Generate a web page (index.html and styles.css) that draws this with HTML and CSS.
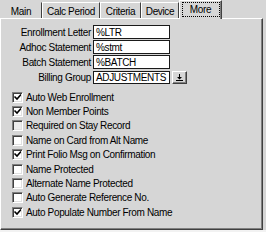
FILE: index.html
```html
<!DOCTYPE html>
<html lang="en">
<head>
    <meta charset="UTF-8">
    <title>More</title>
    <link rel="stylesheet" href="styles.css">
</head>
<body>
    <div class="tabs">
        <div class="tab tab-main">Main</div>
        <div class="tab tab-calc">Calc Period</div>
        <div class="tab tab-criteria">Criteria</div>
        <div class="tab tab-device">Device</div>
        <div class="tab tab-more active"><span class="focus">More</span></div>
    </div>

    <div class="panel">
        <div class="fields">
            <label class="field-label">Enrollment Letter</label>
            <div class="text-box">%LTR</div>

            <label class="field-label">Adhoc Statement</label>
            <div class="text-box">%stmt</div>

            <label class="field-label">Batch Statement</label>
            <div class="text-box">%BATCH</div>

            <label class="field-label">Billing Group</label>
            <div class="combo">
                <div class="text-box">ADJUSTMENTS</div>
                <span class="combo-button">
                    <svg width="7" height="7" viewBox="0 0 7 7">
                        <path d="M3 0h1v3h2l-2.5 2.5L1 3h2z" fill="#000"/>
                        <rect x="0" y="6" width="7" height="1" fill="#000"/>
                    </svg>
                </span>
            </div>
        </div>

        <div class="checks">
            <div class="check-row"><span class="box checked"></span>Auto Web Enrollment</div>
            <div class="check-row"><span class="box checked"></span>Non Member Points</div>
            <div class="check-row"><span class="box dim"></span>Required on Stay Record</div>
            <div class="check-row"><span class="box"></span>Name on Card from Alt Name</div>
            <div class="check-row"><span class="box checked"></span>Print Folio Msg on Confirmation</div>
            <div class="check-row"><span class="box"></span>Name Protected</div>
            <div class="check-row"><span class="box"></span>Alternate Name Protected</div>
            <div class="check-row"><span class="box"></span>Auto Generate Reference No.</div>
            <div class="check-row"><span class="box checked"></span>Auto Populate Number From Name</div>
        </div>
    </div>
    <div class="bottom-line"></div>
</body>
</html>
```

FILE: styles.css
```css
:root {
    --face: #d6d6d6;
    --light: #ffffff;
    --shadow: #808080;
    --dark: #404040;
}

html {
    background-color: var(--face);
}

body {
    margin: 0;
    width: 266px;
    height: 232px;
    overflow: hidden;
    font-family: 'Liberation Sans', Arial, sans-serif;
    font-size: 10px;
    letter-spacing: -0.35px;
    color: #000;
    background-color: var(--face);
}

/* Tabs */
.tabs {
    display: flex;
    align-items: flex-end;
    height: 18px;
    position: relative;
    z-index: 1;
}

.tab {
    box-sizing: border-box;
    height: 16px;
    display: flex;
    align-items: center;
    justify-content: center;
    padding-top: 1px;
    border-top: 1px solid var(--light);
    border-left: 1px solid var(--light);
    border-right: 1px solid var(--dark);
}

.tab-main { width: 42px; border-left-color: var(--face); border-top-color: var(--face); }
.tab-calc { width: 58px; }
.tab-criteria { width: 41px; }
.tab-device { width: 38px; }
.tab-more { width: 43px; }

.tab.active {
    height: 19px;
    margin-bottom: -1px;
    padding-top: 0;
    padding-bottom: 2px;
    background-color: var(--face);
    box-shadow: inset -1px 0 0 var(--shadow);
}

.focus {
    box-sizing: border-box;
    width: 38px;
    height: 15px;
    display: flex;
    align-items: center;
    justify-content: center;
    border: 1px dotted #000;
    margin-top: 1px;
}

/* Panel */
.panel {
    box-sizing: border-box;
    width: 263px;
    height: 212px;
    padding-top: 6px;
    border-top: 1px solid var(--light);
    border-left: 1px solid var(--light);
    border-right: 1px solid var(--dark);
    border-bottom: 1px solid var(--dark);
    box-shadow: inset -1px -1px 0 var(--shadow);
}

.fields {
    display: grid;
    grid-template-columns: 91px 77px;
    grid-auto-rows: 14px;
    column-gap: 1px;
    row-gap: 1px;
}

.field-label {
    display: flex;
    align-items: center;
    justify-content: flex-end;
    padding-right: 1px;
    white-space: nowrap;
}

.text-box {
    box-sizing: border-box;
    width: 77px;
    height: 14px;
    padding-left: 2px;
    display: flex;
    align-items: center;
    background-color: #fff;
    border: 1px solid #1a1a1a;
    white-space: nowrap;
    overflow: hidden;
}

.combo {
    display: flex;
    align-items: center;
    gap: 2px;
    width: 100px;
}

.combo .text-box {
    flex: none;
    height: 13px;
}

.combo-button {
    box-sizing: border-box;
    flex: none;
    width: 15px;
    height: 13px;
    display: flex;
    align-items: center;
    justify-content: center;
    border-top: 1px solid var(--light);
    border-left: 1px solid var(--light);
    border-right: 1px solid var(--dark);
    border-bottom: 1px solid var(--dark);
    box-shadow: inset -1px -1px 0 var(--shadow);
}

/* Checkboxes */
.checks {
    margin-top: 6px;
    padding-left: 11px;
    display: flex;
    flex-direction: column;
}

.check-row {
    height: 14.4px;
    display: flex;
    align-items: center;
    gap: 3px;
    white-space: nowrap;
}

.box {
    box-sizing: border-box;
    flex: none;
    width: 11px;
    height: 11px;
    background-color: #fff;
    border-top: 1px solid var(--shadow);
    border-left: 1px solid var(--shadow);
    border-right: 1px solid var(--light);
    border-bottom: 1px solid var(--light);
    box-shadow: inset 1px 1px 0 var(--dark), inset -1px -1px 0 #e0e0e0;
}

.box.dim {
    background-color: #ececec;
}

.box.checked {
    background-image: url("data:image/svg+xml;utf8,<svg xmlns='http://www.w3.org/2000/svg' width='9' height='9' viewBox='0 0 9 9'><path d='M1.5 3.5l2.5 2.5 4-4.5' fill='none' stroke='black' stroke-width='1.6'/></svg>");
    background-repeat: no-repeat;
    background-position: center;
}

.bottom-line {
    height: 2px;
    background-color: #f2f2f2;
}
```
